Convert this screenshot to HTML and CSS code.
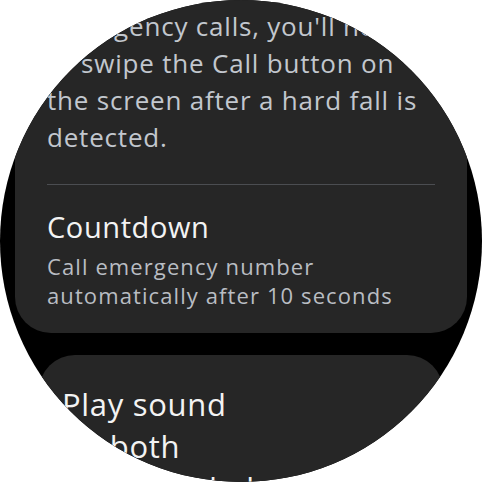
FILE: index.html
```html
<!DOCTYPE html>
<html lang="en">
<head>
<meta charset="utf-8">
<title>Hard fall detection</title>
<link rel="stylesheet" href="styles.css">
</head>
<body>
<div class="watch">
  <div class="list">
    <section class="card card-main">
      <p class="desc">If your watch doesn't support<br>emergency calls, you'll need<br>to swipe the Call button on<br>the screen after a hard fall is<br>detected.</p>
      <hr class="divider">
      <div class="item">
        <div class="item-title">Countdown</div>
        <div class="item-sub">Call emergency number<br>automatically after 10 seconds</div>
      </div>
    </section>
    <section class="card card-next">
      <div class="next-title">Play sound<br>on both<br>watch and phone</div>
    </section>
  </div>
</div>
</body>
</html>
```
FILE: styles.css
```css
html, body {
  margin: 0;
  padding: 0;
  background: #ffffff;
}
body {
  font-family: "Open Sans", "Noto Sans", sans-serif;
}
.watch {
  width: 482px;
  height: 482px;
  border-radius: 50%;
  background: #000000;
  overflow: hidden;
}
.list {
  display: flex;
  flex-direction: column;
  gap: 22px;
  padding: 0 15px;
  margin-top: -49px;
}
.card {
  background: #262626;
  border-radius: 36px;
}
.card-main {
  padding: 20px 32px 23px 32px;
}
.desc {
  margin: 0;
  font-size: 26px;
  line-height: 37px;
  letter-spacing: 0.8px;
  color: #c2c7ce;
  white-space: nowrap;
}
.divider {
  margin: 28px 0 0 0;
  border: 0;
  height: 1px;
  background: #4b4d51;
}
.item {
  display: flex;
  flex-direction: column;
  gap: 7px;
  margin-top: 24px;
}
.item-title {
  font-size: 29px;
  line-height: 36px;
  letter-spacing: 0.6px;
  color: #f3f3f3;
}
.item-sub {
  font-size: 22px;
  line-height: 29px;
  letter-spacing: 1.1px;
  color: #b9bdc3;
  white-space: nowrap;
}
.card-next {
  margin: 0 24px;
  padding: 28px 23px 20px 23px;
}
.next-title {
  font-size: 31px;
  line-height: 42px;
  letter-spacing: 0.7px;
  color: #f3f3f3;
  white-space: nowrap;
}
```
